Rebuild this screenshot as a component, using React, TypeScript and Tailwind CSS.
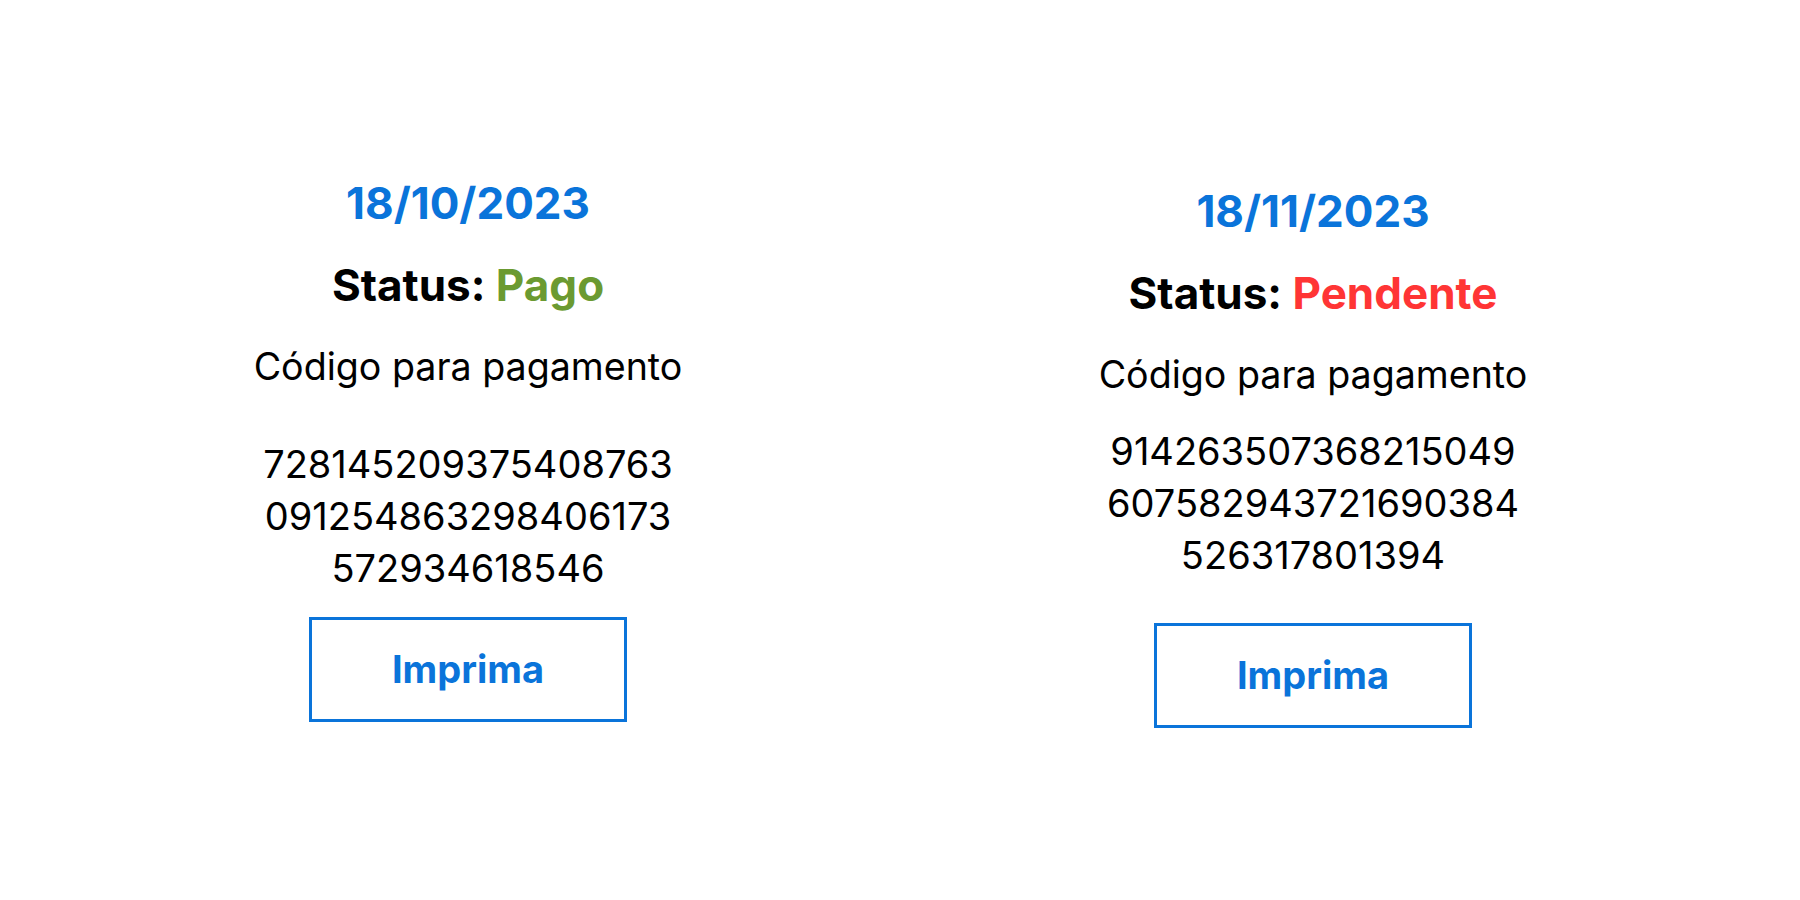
type Boleto = {
  date: string;
  status: string;
  statusColor: string;
  code: string[];
  top: string;
  codeGap: string;
  buttonGap: string;
};

const boletos: Boleto[] = [
  {
    date: '18/10/2023',
    status: 'Pago',
    statusColor: 'text-[#6b9a31]',
    code: ['728145209375408763', '091254863298406173', '572934618546'],
    top: 'mt-[176px]',
    codeGap: 'mt-[48px]',
    buttonGap: 'mt-[23px]',
  },
  {
    date: '18/11/2023',
    status: 'Pendente',
    statusColor: 'text-[#ff3535]',
    code: ['914263507368215049', '607582943721690384', '526317801394'],
    top: 'mt-[184px]',
    codeGap: 'mt-[27px]',
    buttonGap: 'mt-[42px]',
  },
];

function BoletoCard({ boleto }: { boleto: Boleto }) {
  return (
    <div className={`w-[440px] flex flex-col items-center text-center ${boleto.top}`}>
      <h2 className="text-[44px] leading-[54px] font-bold text-[#0a74da]">{boleto.date}</h2>
      <p className="mt-[28px] text-[44px] leading-[54px] font-bold text-black">
        Status: <span className={boleto.statusColor}>{boleto.status}</span>
      </p>
      <p className="mt-[32px] text-[37.6px] leading-[46px] text-black">Código para pagamento</p>
      <div className={`${boleto.codeGap} text-[38px] leading-[52px] text-black`}>
        {boleto.code.map((line) => (
          <div key={line}>{line}</div>
        ))}
      </div>
      <button
        className={`${boleto.buttonGap} w-[318px] h-[105px] border-[3px] border-[#0a74da] text-[38px] font-bold text-[#0a74da]`}
      >
        Imprima
      </button>
    </div>
  );
}

export default function App() {
  return (
    <div className="w-[1800px] h-[900px] bg-white font-['Inter',sans-serif]">
      <div className="flex pl-[248px] gap-[405px]">
        {boletos.map((b) => (
          <BoletoCard key={b.date} boleto={b} />
        ))}
      </div>
    </div>
  );
}
